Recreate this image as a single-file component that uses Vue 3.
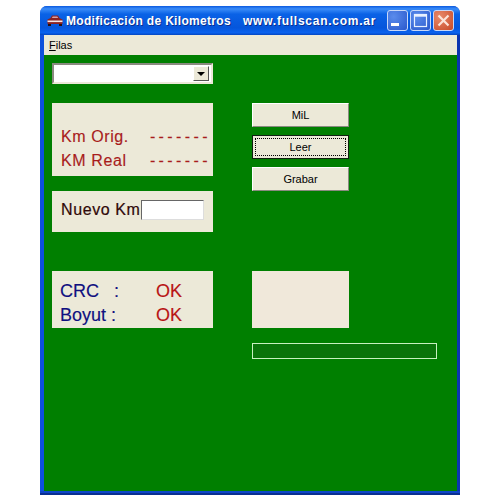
<script setup>
const menuItems = ["Filas"];
const buttons = [
  { label: "MiL", focused: false },
  { label: "Leer", focused: true },
  { label: "Grabar", focused: false },
];
</script>

<template>
  <div class="page">
    <div class="window">
      <div class="titlebar">
        <svg class="car" width="16" height="11" viewBox="0 0 16 11">
          <path d="M3.5 3 L5 0.5 H11 L12.5 3 L15.5 4.5 V9 H0.5 V4.5 Z" fill="#8c2222" />
          <path d="M4.8 3 L5.8 1.4 H10.2 L11.2 3 Z" fill="#d8a0a0" />
          <rect x="0.5" y="5.5" width="15" height="1.6" fill="#f4e4e4" />
          <rect x="1" y="9" width="3" height="2" fill="#280c0c" />
          <rect x="12" y="9" width="3" height="2" fill="#280c0c" />
        </svg>
        <span class="title">Modificación de Kilometros</span>
        <span class="site">www.fullscan.com.ar</span>
        <div class="caption-buttons">
          <div class="cap-btn">
            <svg width="21" height="21" viewBox="0 0 21 21"><rect x="4" y="13" width="8" height="3" fill="#fff" /></svg>
          </div>
          <div class="cap-btn">
            <svg width="21" height="21" viewBox="0 0 21 21">
              <rect x="4.5" y="4.5" width="12" height="12" fill="none" stroke="#e8f0ff" stroke-width="1.2" />
              <rect x="4.5" y="4.5" width="12" height="2.2" fill="#e8f0ff" />
            </svg>
          </div>
          <div class="cap-btn close">
            <svg width="21" height="21" viewBox="0 0 21 21">
              <path d="M5.5 5.5 L15.5 15.5 M15.5 5.5 L5.5 15.5" stroke="#fbe4d8" stroke-width="2.2" />
            </svg>
          </div>
        </div>
      </div>

      <div class="menubar">
        <span v-for="item in menuItems" :key="item" class="menu-item"><u>{{ item[0] }}</u>{{ item.slice(1) }}</span>
      </div>

      <div class="client">
        <div class="left">
          <div class="combo">
            <div class="combo-arrow"><span class="arrow"></span></div>
          </div>

          <div class="panel km-panel">
            <div class="row"><span>Km Orig.</span><span class="dashes">-------</span></div>
            <div class="row"><span>KM Real</span><span class="dashes">-------</span></div>
          </div>

          <div class="panel nuevo-panel">
            <span class="nuevo-label">Nuevo Km</span>
            <div class="nuevo-input"></div>
          </div>

          <div class="panel status-panel">
            <div class="status-row"><span class="status-name">CRC&nbsp;&nbsp; :</span><span class="ok">OK</span></div>
            <div class="status-row"><span class="status-name">Boyut :</span><span class="ok">OK</span></div>
          </div>
        </div>

        <div class="right">
          <div
            v-for="b in buttons"
            :key="b.label"
            class="btn"
            :class="{ focused: b.focused }"
          >
            <span class="btn-inner">{{ b.label }}</span>
          </div>
          <div class="blank-box"></div>
          <div class="progress"></div>
        </div>
      </div>
    </div>
  </div>
</template>

<style scoped>
.page {
  width: 500px;
  height: 500px;
  padding: 6px 40px 5px;
  box-sizing: border-box;
  background: #fff;
}
.window {
  height: 100%;
  display: flex;
  flex-direction: column;
  border-radius: 7px 7px 0 0;
  background:
    linear-gradient(to top, #0a2f90 2px, #0e46c8 2px, #0e46c8 4px, transparent 4px),
    linear-gradient(to right, #0e50dc 50%, #0a34b0 50%);
  overflow: hidden;
  font-family: "Liberation Sans", Arial, sans-serif;
}
.titlebar {
  height: 29px;
  flex: none;
  display: flex;
  align-items: center;
  padding: 0 6px 0 7px;
  background: linear-gradient(#0a5ae0 0%, #3a8cf8 10%, #0a62e6 28%, #0556dc 75%, #0a62ee 92%, #0446c0 100%);
  color: #fff;
  font-size: 12px;
  font-weight: bold;
  letter-spacing: 0.32px;
  text-shadow: 1px 1px 0 #0a2f90;
}
.car {
  flex: none;
}
.title {
  margin-left: 3px;
}
.site {
  margin-left: 12px;
  letter-spacing: 0.75px;
}
.caption-buttons {
  margin-left: auto;
  display: flex;
  gap: 2px;
}
.cap-btn {
  width: 21px;
  height: 21px;
  box-sizing: border-box;
  border: 1px solid #c8d8f8;
  border-radius: 3px;
  background: radial-gradient(circle at 30% 30%, #5a8cec, #2a58cc);
  overflow: hidden;
}
.cap-btn svg {
  display: block;
  margin: -1px;
}
.cap-btn.close {
  background: radial-gradient(circle at 30% 30%, #e88a6a, #c84a28);
}
.menubar {
  height: 20px;
  flex: none;
  margin: 0 3px 0 4px;
  padding-left: 5px;
  display: flex;
  align-items: center;
  background: #ece9d8;
  font-size: 11px;
  color: #000;
}
.client {
  flex: 1;
  margin: 0 3px 4px 4px;
  padding: 8px 8px 0;
  display: flex;
  gap: 39px;
  background: #007f00;
}
.left {
  width: 161px;
  flex: none;
  display: flex;
  flex-direction: column;
}
.combo {
  height: 21px;
  box-sizing: border-box;
  display: flex;
  justify-content: flex-end;
  align-items: center;
  padding-right: 2px;
  background: #fff;
  border: 2px solid;
  border-color: #8a8a80 #ece9d8 #ece9d8 #8a8a80;
}
.combo-arrow {
  width: 16px;
  height: 15px;
  display: flex;
  align-items: center;
  justify-content: center;
  background: #ece9d8;
  border: 1px solid;
  border-color: #fff #555 #555 #fff;
  box-sizing: border-box;
}
.arrow {
  width: 0;
  height: 0;
  border: 4px solid transparent;
  border-top: 4px solid #000;
  border-bottom: 0;
}
.panel {
  background: #ece9d8;
  box-sizing: border-box;
}
.km-panel {
  height: 73px;
  margin-top: 19px;
  padding: 25px 5px 0 9px;
  color: #a81c1c;
  font-size: 16px;
  letter-spacing: 0.6px;
  -webkit-text-stroke: 0.15px #a81c1c;
  display: flex;
  flex-direction: column;
  gap: 6px;
}
.row {
  display: flex;
  justify-content: space-between;
  line-height: 18px;
}
.dashes {
  letter-spacing: 3.4px;
  margin-right: -3px;
}
.nuevo-panel {
  height: 41px;
  margin-top: 15px;
  padding: 9px 9px 0 9px;
  display: flex;
  align-items: flex-start;
}
.nuevo-label {
  font-size: 16px;
  line-height: 20px;
  width: 80px;
  color: #300808;
  letter-spacing: 0.6px;
  -webkit-text-stroke: 0.2px #300808;
  white-space: nowrap;
}
.nuevo-input {
  width: 63px;
  height: 20px;
  box-sizing: border-box;
  background: #fff;
  border: 1px solid;
  border-color: #666 #ddd #ddd #666;
}
.status-panel {
  height: 57px;
  margin-top: 39px;
  padding: 8px 0 0 8px;
  font-size: 18px;
  line-height: 24px;
  -webkit-text-stroke: 0.15px;
}
.status-row {
  display: flex;
}
.status-name {
  width: 96px;
  color: #101080;
}
.ok {
  color: #b81414;
}
.right {
  flex: 1;
  padding-top: 40px;
  display: flex;
  flex-direction: column;
  align-items: flex-start;
}
.btn {
  width: 97px;
  height: 24px;
  box-sizing: border-box;
  margin-bottom: 8px;
  display: flex;
  background: #ece9d8;
  border: 1px solid;
  border-color: #fff #8a8a80 #8a8a80 #fff;
  font-size: 11px;
  color: #000;
}
.btn.focused {
  border: 1px solid #102010;
  padding: 2px;
}
.btn-inner {
  flex: 1;
  display: flex;
  align-items: center;
  justify-content: center;
}
.btn.focused .btn-inner {
  border: 1px dotted #000;
}
.blank-box {
  width: 97px;
  height: 57px;
  margin-top: 72px;
  background: #f0e8da;
}
.progress {
  width: 185px;
  height: 16px;
  box-sizing: border-box;
  margin-top: 15px;
  background: #0a740a;
  border: 1px solid #c8f0c0;
}
</style>

<style>
html, body {
  margin: 0;
  background: #fff;
}
</style>
